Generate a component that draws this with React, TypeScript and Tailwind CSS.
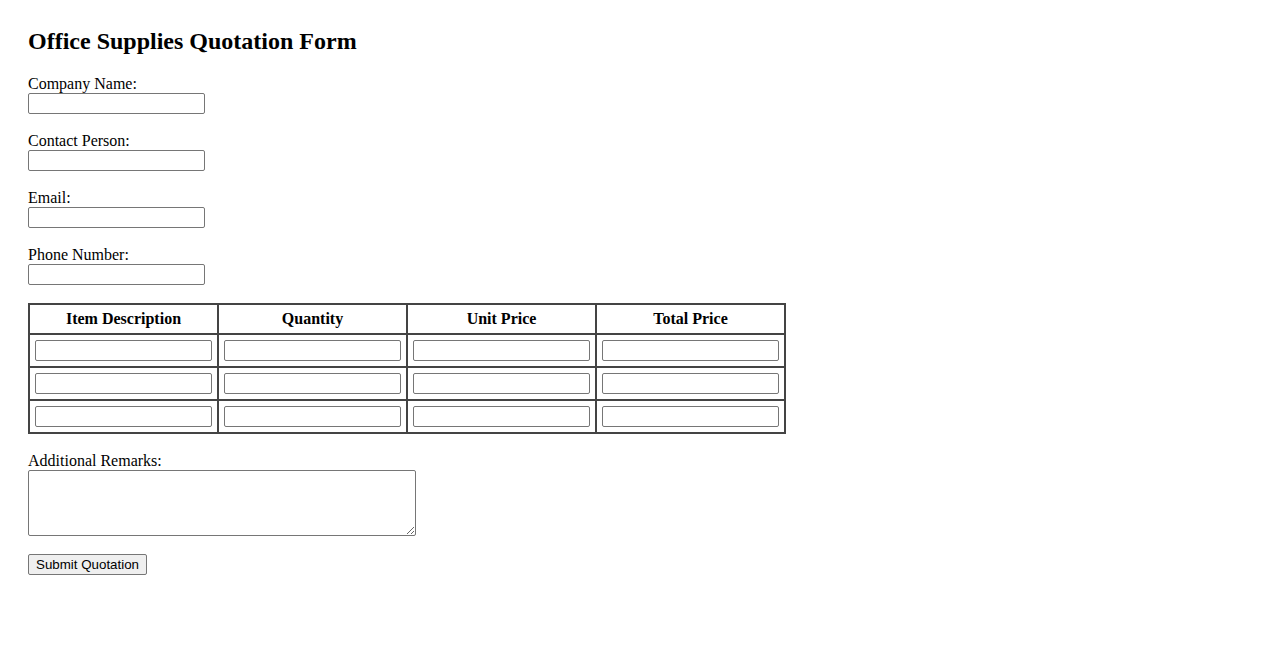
const fields = ["Company Name:", "Contact Person:", "Email:", "Phone Number:"];
const columns = ["Item Description", "Quantity", "Unit Price", "Total Price"];

const inputClass =
  "block w-[177px] h-[21px] border border-[#767676] rounded-[2px] bg-white px-[2px] py-[1px] text-[13.33px] font-['Liberation_Sans',Arial,sans-serif]";

const App = () => {
  return (
    <div className="min-h-[650px] bg-white pl-[28px] pt-[28px] font-['Liberation_Serif','Times_New_Roman',serif] text-[16px] text-black">
      <h2 className="text-[24px] font-bold leading-[27px] mb-[20px]">
        Office Supplies Quotation Form
      </h2>

      {fields.map((label) => (
        <div key={label} className="mb-[18px]">
          <label className="block leading-[18px]">{label}</label>
          <input type="text" className={inputClass} />
        </div>
      ))}

      <table className="border-separate border-spacing-0 border border-[#444]">
        <thead>
          <tr>
            {columns.map((col) => (
              <th
                key={col}
                className="border border-[#444] p-[5px] leading-[18px] font-bold text-center"
              >
                {col}
              </th>
            ))}
          </tr>
        </thead>
        <tbody>
          {[0, 1, 2].map((row) => (
            <tr key={row}>
              {columns.map((col) => (
                <td key={col} className="border border-[#444] p-[5px]">
                  <input type="text" className={inputClass} />
                </td>
              ))}
            </tr>
          ))}
        </tbody>
      </table>

      <div className="mt-[18px] mb-[18px]">
        <label className="block leading-[18px]">Additional Remarks:</label>
        <textarea className="block w-[388px] h-[66px] border border-[#767676] rounded-[2px] bg-white px-[2px] py-[2px] text-[13.33px] font-['Liberation_Mono',monospace]" />
      </div>

      <button
        type="submit"
        className="block h-[21px] px-[7px] border border-[#767676] rounded-[2px] bg-[#efefef] text-[13.33px] leading-[17px] font-['Liberation_Sans',Arial,sans-serif] text-black"
      >
        Submit Quotation
      </button>
    </div>
  );
};

export default App;
